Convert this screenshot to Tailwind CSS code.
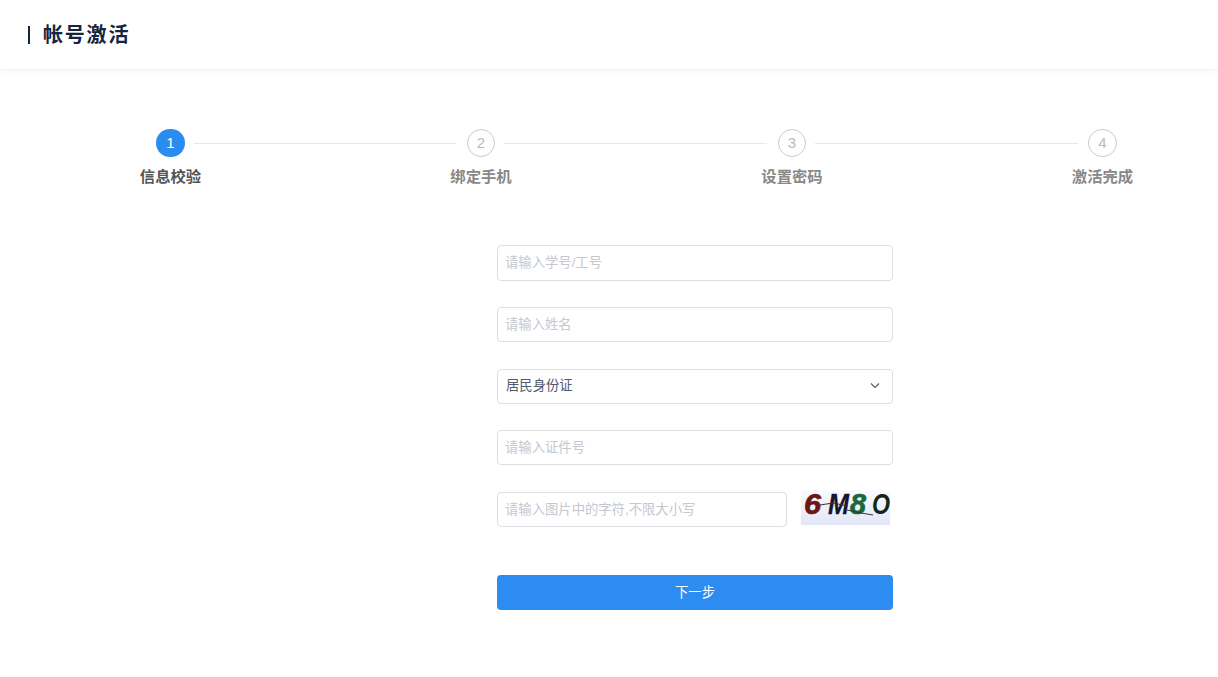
<!DOCTYPE html>
<html lang="zh-CN">
<head>
    <meta charset="UTF-8">
    <title>帐号激活</title>
    <script src="https://cdn.jsdelivr.net/npm/@tailwindcss/browser@4"></script>
</head>
<body class="bg-white min-h-screen font-['Liberation_Sans','Noto_Sans_CJK_SC',sans-serif] overflow-hidden">
    <header class="h-[69px] flex items-center pl-7 shadow-[0_1px_6px_rgba(0,0,0,0.07)]">
        <span class="w-[2px] h-[18px] bg-[#12263f] mr-[13px]"></span>
        <h1 class="text-xl font-bold tracking-[1.8px] text-[#12263f]">帐号激活</h1>
    </header>

    <!-- steps -->
    <div class="flex pl-[156px] pt-[60px]">
        <div class="w-[311px] flex shrink-0">
            <div class="w-[29px] flex flex-col items-center">
                <div class="w-[29px] h-[28px] shrink-0 rounded-full bg-[#2b8cf0] text-white text-[15px] flex items-center justify-center">1</div>
                <div class="mt-[8px] text-[15.33px] leading-[24px] font-bold whitespace-nowrap text-[#555]">信息校验</div>
            </div>
            <div class="h-px w-[262px] bg-[#e8e8e8] mt-[14px] ml-[9px]"></div>
        </div>
        <div class="w-[311px] flex shrink-0">
            <div class="w-[28px] flex flex-col items-center">
                <div class="w-[28px] h-[28px] shrink-0 rounded-full border border-[#ccc] text-[#bbb] text-[15px] flex items-center justify-center">2</div>
                <div class="mt-[8px] text-[15.33px] leading-[24px] font-bold whitespace-nowrap text-[#888]">绑定手机</div>
            </div>
            <div class="h-px w-[263px] bg-[#e8e8e8] mt-[14px] ml-[9px]"></div>
        </div>
        <div class="w-[310px] flex shrink-0">
            <div class="w-[28px] flex flex-col items-center">
                <div class="w-[28px] h-[28px] shrink-0 rounded-full border border-[#ccc] text-[#bbb] text-[15px] flex items-center justify-center">3</div>
                <div class="mt-[8px] text-[15.33px] leading-[24px] font-bold whitespace-nowrap text-[#888]">设置密码</div>
            </div>
            <div class="h-px w-[263px] bg-[#e8e8e8] mt-[14px] ml-[9px]"></div>
        </div>
        <div class="w-[29px] flex flex-col items-center shrink-0">
            <div class="w-[29px] h-[28px] shrink-0 rounded-full border border-[#ccc] text-[#bbb] text-[15px] flex items-center justify-center">4</div>
            <div class="mt-[8px] text-[15.33px] leading-[24px] font-bold whitespace-nowrap text-[#888]">激活完成</div>
        </div>
    </div>

    <!-- form -->
    <form class="w-[396px] ml-[497px] mt-[56.4px] flex flex-col gap-[26.4px]">
        <input type="text" placeholder="请输入学号/工号" class="h-[35.2px] px-[7px] text-[13.33px] border border-[#dcdee2] rounded placeholder:text-[#c5c8ce] outline-none">
        <input type="text" placeholder="请输入姓名" class="h-[35.2px] px-[7px] text-[13.33px] border border-[#dcdee2] rounded placeholder:text-[#c5c8ce] outline-none">
        <div class="h-[35.2px] pl-2 pr-[10px] flex items-center justify-between text-[13.33px] text-[#515a6e] border border-[#dcdee2] rounded">
            <span>居民身份证</span>
            <svg class="w-3.5 h-3.5" viewBox="0 0 14 14" fill="none" stroke="#515a6e" stroke-width="1.1"><path d="M3 4.500l4 4 4-4"/></svg>
        </div>
        <input type="text" placeholder="请输入证件号" class="h-[35.2px] px-[7px] text-[13.33px] border border-[#dcdee2] rounded placeholder:text-[#c5c8ce] outline-none">
        <div class="flex items-start">
            <input type="text" placeholder="请输入图片中的字符,不限大小写" class="w-[290px] h-[35.2px] px-[7px] text-[13.33px] border border-[#dcdee2] rounded placeholder:text-[#c5c8ce] outline-none">
            <svg class="ml-[14px] -mt-[2px] overflow-visible bg-gradient-to-b from-[#fafbfe] to-[#e3e6f7]" width="89" height="35" viewBox="0 0 89 35" font-family="Liberation Sans" font-style="italic" font-weight="700" font-size="30">
                <text x="3" y="24" fill="#6e1616" stroke="#6e1616" stroke-width=".7" textLength="17" lengthAdjust="spacingAndGlyphs">6</text>
                <text x="27" y="24" fill="#16162e" stroke="#16162e" stroke-width=".3" textLength="21" lengthAdjust="spacingAndGlyphs">M</text>
                <text x="49" y="24" fill="#17693c" stroke="#17693c" stroke-width=".7" textLength="16" lengthAdjust="spacingAndGlyphs">8</text>
                <text x="71" y="24" fill="#12261c" textLength="18" lengthAdjust="spacingAndGlyphs">O</text>
                <path d="M19 15 32 13 47 16M46 20 60 23 72 25" fill="none" stroke="#333" stroke-width="1"/>
            </svg>
        </div>
        <button type="button" class="mt-[21.6px] h-[35.2px] pt-px bg-[#2d8cf0] text-white text-[13.33px] rounded">下一步</button>
    </form>
</body>
</html>
